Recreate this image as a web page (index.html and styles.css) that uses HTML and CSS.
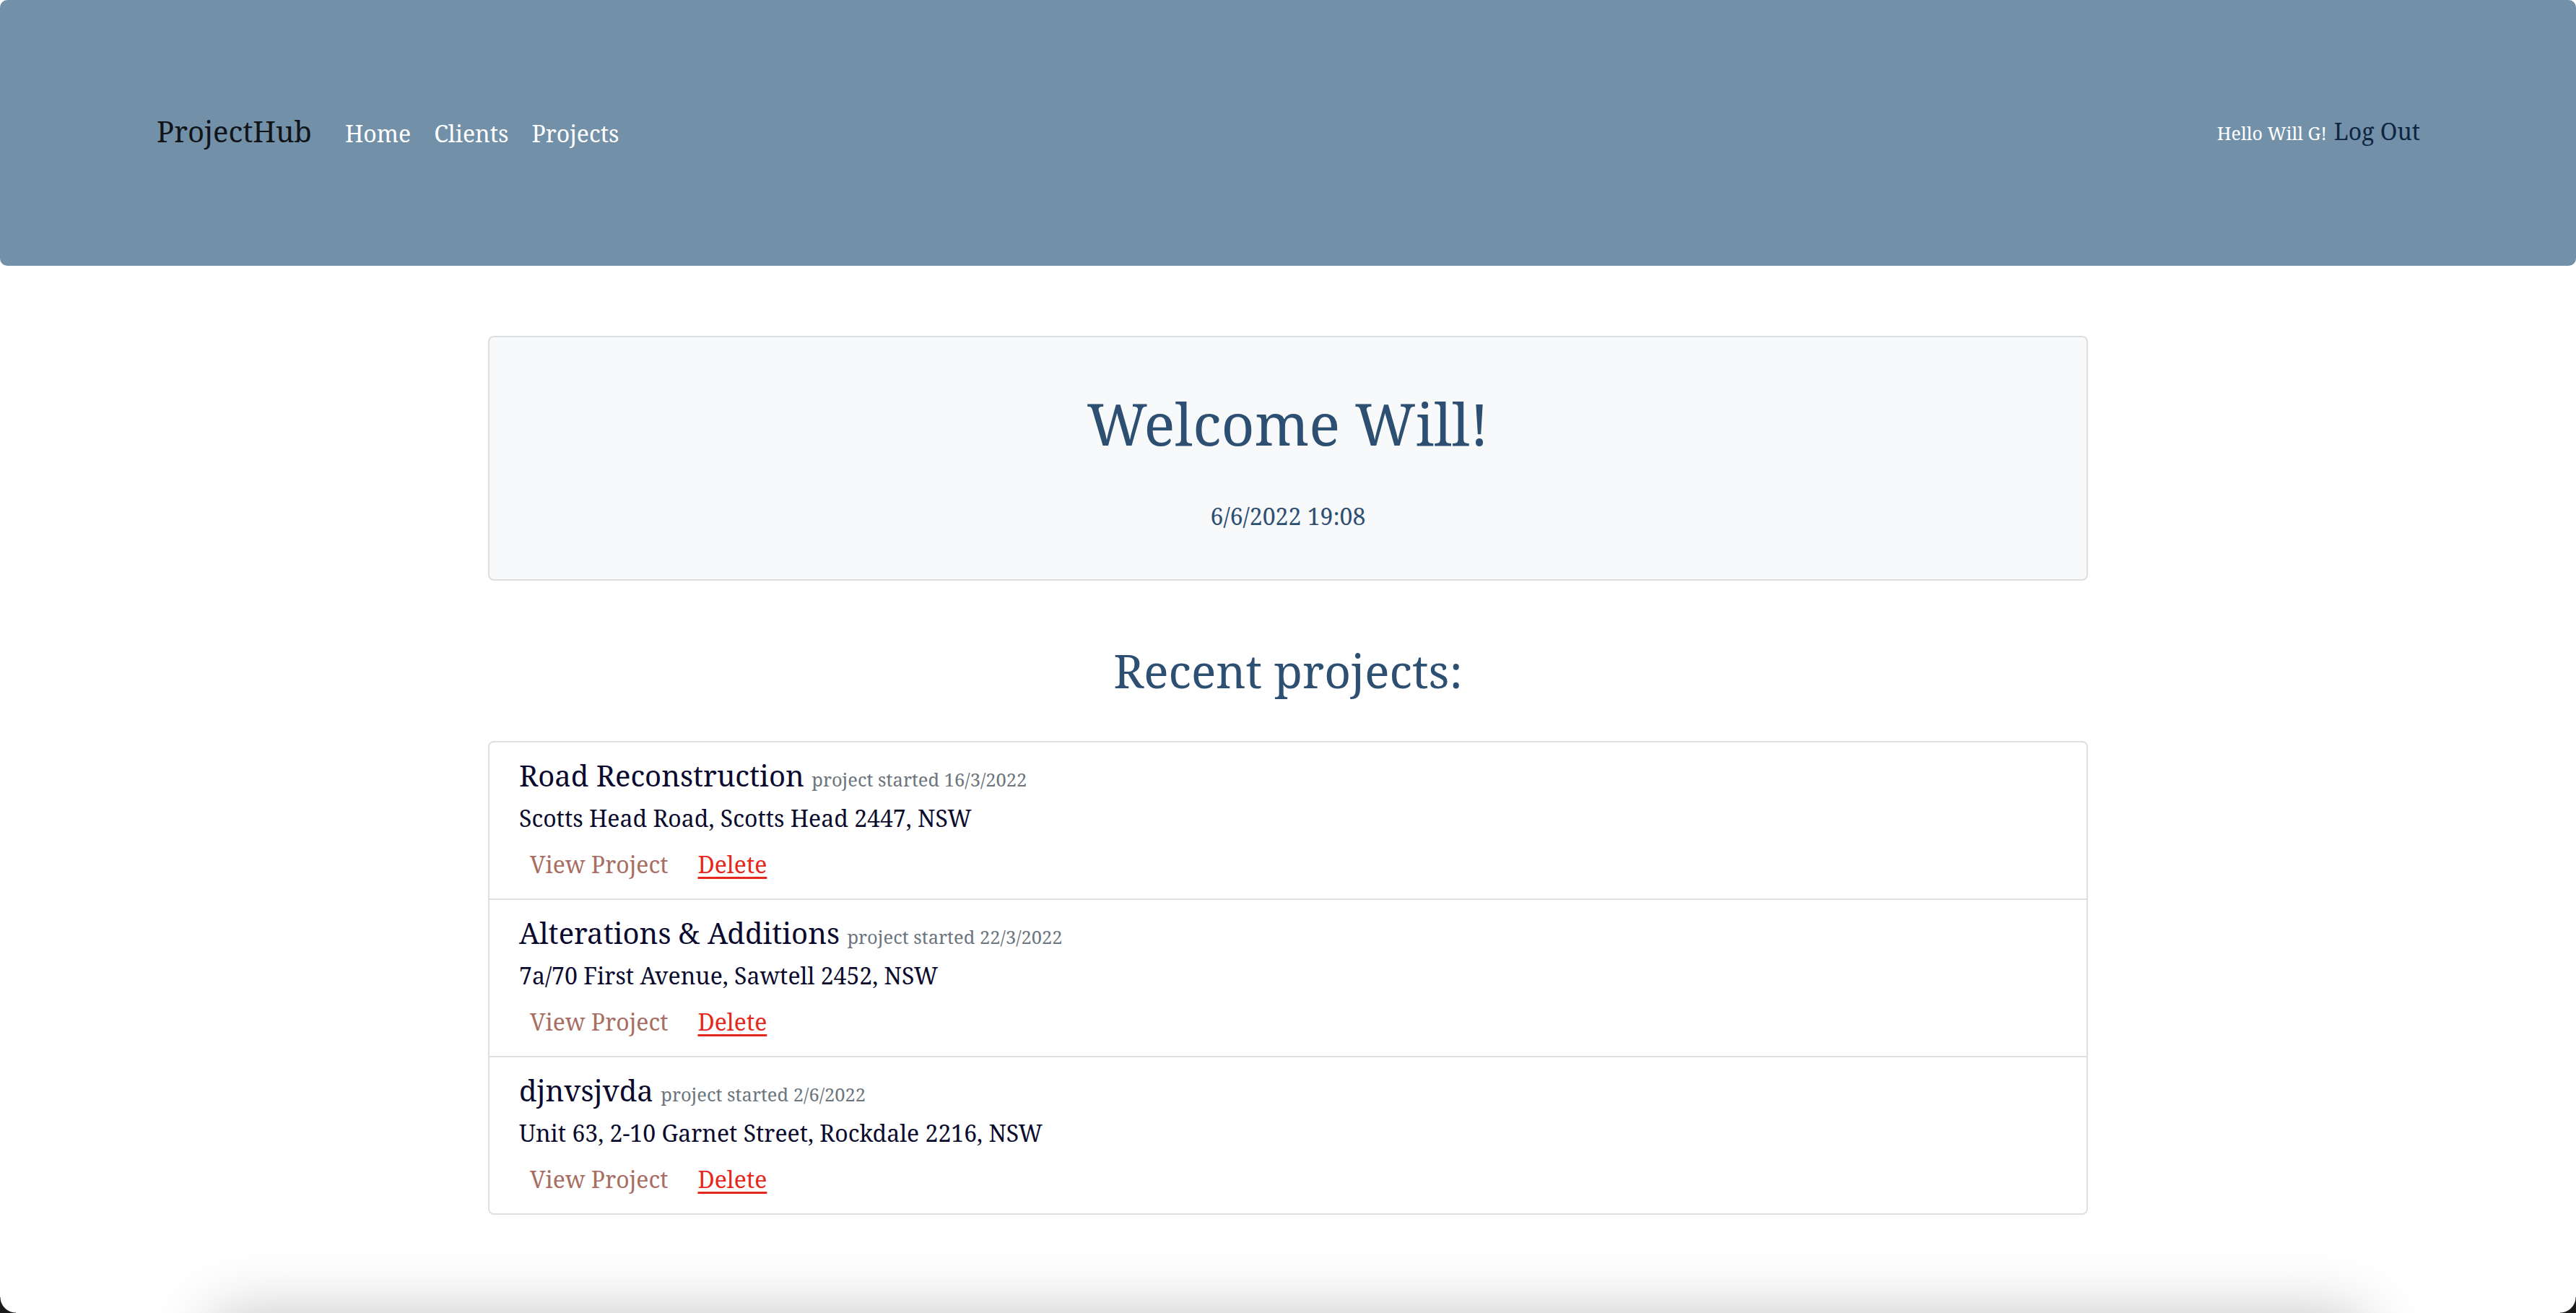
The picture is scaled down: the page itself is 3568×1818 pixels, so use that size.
FILE: index.html
```html
<!DOCTYPE html>
<html lang="en">
<head>
<meta charset="utf-8">
<title>ProjectHub</title>
<link rel="stylesheet" href="styles.css">
</head>
<body>
<nav class="navbar">
  <div class="nav-left">
    <a class="brand" href="#">ProjectHub</a>
    <a class="nav-link" href="#">Home</a>
    <a class="nav-link" href="#">Clients</a>
    <a class="nav-link" href="#">Projects</a>
  </div>
  <div class="nav-right">
    <span class="hello">Hello Will G!</span>
    <a class="logout" href="#">Log Out</a>
  </div>
</nav>
<main class="container">
  <section class="welcome">
    <h1 class="welcome-title">Welcome Will!</h1>
    <p class="welcome-date">6/6/2022 19:08</p>
  </section>
  <h2 class="section-title">Recent projects:</h2>
  <ul class="project-list">
    <li class="project">
      <div class="project-head"><span class="project-name">Road Reconstruction</span> <small class="project-date">project started 16/3/2022</small></div>
      <p class="project-address">Scotts Head Road, Scotts Head 2447, NSW</p>
      <div class="project-actions"><a class="view-link" href="#">View Project</a><a class="delete-link" href="#">Delete</a></div>
    </li>
    <li class="project">
      <div class="project-head"><span class="project-name">Alterations &amp; Additions</span> <small class="project-date">project started 22/3/2022</small></div>
      <p class="project-address">7a/70 First Avenue, Sawtell 2452, NSW</p>
      <div class="project-actions"><a class="view-link" href="#">View Project</a><a class="delete-link" href="#">Delete</a></div>
    </li>
    <li class="project">
      <div class="project-head"><span class="project-name">djnvsjvda</span> <small class="project-date">project started 2/6/2022</small></div>
      <p class="project-address">Unit 63, 2-10 Garnet Street, Rockdale 2216, NSW</p>
      <div class="project-actions"><a class="view-link" href="#">View Project</a><a class="delete-link" href="#">Delete</a></div>
    </li>
  </ul>
</main>
<footer class="footer"></footer>
</body>
</html>
```
FILE: styles.css
```css
html, body {
  margin: 0;
  padding: 0;
}
body {
  font-family: "Noto Serif", "DejaVu Serif", serif;
  background: #ffffff;
  color: #0b0b2e;
  overflow: hidden;
}
body::before,
body::after {
  content: "";
  position: fixed;
  bottom: 0;
  width: 22px;
  height: 22px;
  pointer-events: none;
}
body::before {
  left: 0;
  background: radial-gradient(circle at 22px 0, transparent 21px, #1a1a1a 22px);
}
body::after {
  right: 0;
  background: radial-gradient(circle at 0 0, transparent 21px, #1a1a1a 22px);
}
a { text-decoration: none; }

.navbar {
  height: 368px;
  background: #7291a9;
  border-radius: 10px;
  display: flex;
  align-items: center;
  justify-content: space-between;
  padding: 0 216px 4px 217px;
  box-sizing: border-box;
}
.nav-left, .nav-right {
  display: flex;
  align-items: baseline;
}
.brand {
  font-size: 40px;
  color: #111418;
  margin-right: 30px;
  line-height: 60px;
}
.nav-link {
  font-size: 32px;
  color: #ffffff;
  padding: 0 16px;
  line-height: 48px;
}
.hello {
  font-size: 25px;
  color: #ffffff;
}
.logout {
  font-size: 32px;
  color: #0e2440;
  margin-left: 10px;
  line-height: 48px;
}

.container {
  width: 2216px;
  margin: 0 auto;
}
.welcome {
  margin-top: 97px;
  background: #f8f9fa;
  border: 2px solid #dcdee0;
  border-radius: 8px;
  text-align: center;
  padding: 71px 0 63px;
}
.welcome-title {
  margin: 0 0 57px;
  font-size: 80px;
  line-height: 96px;
  font-weight: 400;
  color: #2d4f72;
}
.welcome-date {
  margin: 0;
  font-size: 32px;
  line-height: 48px;
  color: #2d4f72;
}
.section-title {
  margin: 86px 0 59px;
  text-align: center;
  font-size: 64px;
  line-height: 77px;
  font-weight: 400;
  color: #2d4f72;
}
.project-list {
  list-style: none;
  margin: 0;
  padding: 0;
  border: 2px solid #dfdfdf;
  border-radius: 8px;
}
.project {
  padding: 22px 41px 23px;
  border-top: 2px solid #dfdfdf;
}
.project:first-child { border-top: 0; }
.project-head {
  font-size: 40px;
  line-height: 48px;
  margin-bottom: 11px;
}
.project-name {
  font-size: 40px;
  color: #0a0a2e;
}
.project-date {
  font-size: 25.5px;
  line-height: 1;
  color: #6c757d;
}
.project-address {
  margin: 0 0 16px;
  font-size: 32px;
  line-height: 48px;
  color: #0b0b2e;
}
.project-actions {
  display: flex;
  font-size: 32px;
  line-height: 48px;
}
.view-link {
  color: #a86d63;
  padding: 0 15px;
}
.delete-link {
  color: #e5281c;
  margin-left: 26px;
  text-decoration: underline;
  text-decoration-thickness: 3px;
  text-underline-offset: 5px;
}
.footer {
  margin: 140px auto 0;
  width: 2990px;
  height: 200px;
  background: #ffffff;
  border-radius: 40px;
  box-shadow: 0 0 90px rgba(0, 0, 0, 0.25);
}
```
